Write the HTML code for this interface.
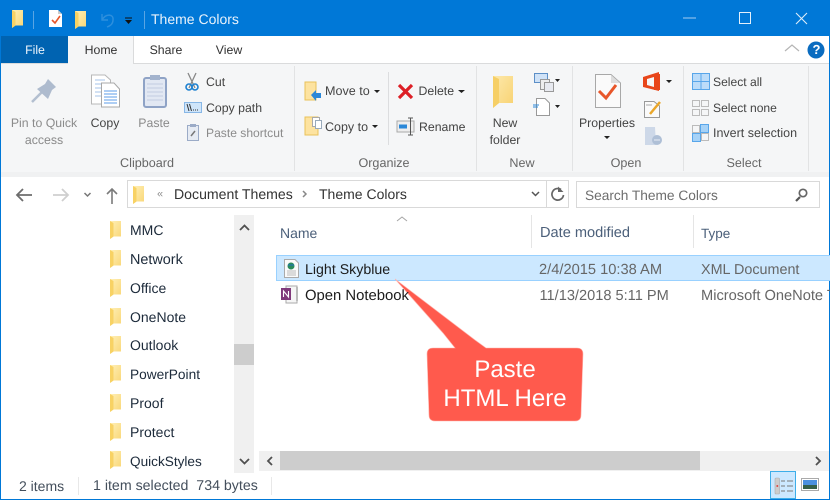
<!DOCTYPE html>
<html><head><meta charset="utf-8"><style>
html,body{margin:0;padding:0;background:#fff}
#p{position:relative;width:830px;height:500px;overflow:hidden;background:#fff;font-family:"Liberation Sans",sans-serif;font-size:14px;color:#1c1c1c;text-rendering:geometricPrecision}
.t{position:absolute;white-space:nowrap;line-height:18px;height:18px}
.g{color:#8b8b8b}.d{color:#444}.m{color:#666;font-size:12.6px}
.c{transform:translateX(-50%)}
.b{position:absolute}
svg{position:absolute;left:0;top:0}
</style></head><body><div id="p">
<div class="b" style="left:0;top:0;width:830px;height:36px;background:#0078d7"></div>
<div class="b" style="left:0;top:64px;width:830px;height:113px;background:#f5f6f7"></div>
<div class="b" style="left:0;top:63px;width:830px;height:1px;background:#dadbdc"></div>
<div class="b" style="left:0;top:172px;width:830px;height:5px;background:#f0f1f2"></div>
<div class="b" style="left:1px;top:36px;width:67px;height:27px;background:#0063b1"></div>
<div class="b" style="left:68px;top:36px;width:66px;height:29px;background:#f5f6f7"></div>
<div class="b" style="left:133px;top:36px;width:1px;height:28px;background:#dadbdc"></div>
<div class="b" style="left:0;top:0;width:1px;height:500px;background:#0078d7"></div>
<div class="b" style="left:829px;top:0;width:1px;height:500px;background:#0078d7"></div>
<div class="b" style="left:0;top:499px;width:830px;height:1px;background:#0078d7"></div>

<div class="b" style="left:294px;top:66px;width:1px;height:105px;background:#e2e3e4"></div>
<div class="b" style="left:476px;top:66px;width:1px;height:105px;background:#e2e3e4"></div>
<div class="b" style="left:572px;top:66px;width:1px;height:105px;background:#e2e3e4"></div>
<div class="b" style="left:683px;top:66px;width:1px;height:105px;background:#e2e3e4"></div>
<div class="b" style="left:808px;top:66px;width:1px;height:105px;background:#e2e3e4"></div>
<div class="b" style="left:388px;top:72px;width:1px;height:73px;background:#dcdddf"></div>

<div class="b" style="left:127px;top:180px;width:440px;height:26px;border:1px solid #d9d9d9;box-sizing:content-box"></div>
<div class="b" style="left:546px;top:180px;width:1px;height:28px;background:#d9d9d9"></div>
<div class="b" style="left:576px;top:181px;width:242px;height:25px;border:1px solid #d9d9d9"></div>

<div class="b" style="left:234px;top:215px;width:20px;height:258px;background:#f0f0f0"></div>
<div class="b" style="left:234px;top:344px;width:20px;height:21px;background:#cdcdcd"></div>
<div class="b" style="left:259px;top:451px;width:570px;height:20px;background:#f0f0f0"></div>
<div class="b" style="left:280px;top:451px;width:420px;height:19px;background:#cdcdcd"></div>
<div class="b" style="left:531px;top:215px;width:1px;height:33px;background:#e5e5e5"></div>
<div class="b" style="left:693px;top:215px;width:1px;height:33px;background:#e5e5e5"></div>
<div class="b" style="left:276px;top:255px;width:554px;height:26px;background:#cce8ff;border:1px solid #99d1ff;border-right:0;box-sizing:border-box"></div>
<div class="b" style="left:78px;top:477px;width:1px;height:18px;background:#e8e8e8"></div>
<div class="b" style="left:271px;top:477px;width:1px;height:18px;background:#e8e8e8"></div>
<div class="b" style="left:770px;top:471px;width:26px;height:28px;background:#cce8ff;border:1px solid #3daee9;box-sizing:border-box"></div>

<svg width="830" height="500" viewBox="0 0 830 500">
<defs>
<linearGradient id="fb" x1="0" y1="0" x2="1" y2="1"><stop offset="0" stop-color="#fff0b8"/><stop offset="1" stop-color="#f9d676"/></linearGradient>
<g id="f"><path d="M0 0H11V15.500H3.500L0 18Z" fill="url(#fb)"/><path d="M0 0L3.500 2V15.500L0 18Z" fill="#f8d264"/></g>
</defs>
<use href="#f" x="12" y="10"/>
<rect x="33" y="11" width="1" height="18" fill="#5aa5e3"/>
<path d="M49 10H58L62 14V27H49Z" fill="#fff"/><path d="M58 10L62 14H58Z" fill="#ccc"/><path d="M52 20L55 23L60 16" fill="none" stroke="#e8562a" stroke-width="1.600"/>
<use href="#f" x="75" y="11"/>
<path d="M102 14L102 20H108M102 20C106 13 114 14 113 20C113 24 110 26 107 27" fill="none" stroke="#2d8fdd" stroke-width="1.400"/>
<path d="M125 18H132" stroke="#111" stroke-width="1"/><path d="M125 20H132L128.500 24Z" fill="#111"/>
<rect x="144" y="11" width="1" height="18" fill="#5aa5e3"/>
<path d="M683 18H696" stroke="#a6cdf0" stroke-width="1"/>
<rect x="739.500" y="12.500" width="11" height="11" fill="none" stroke="#e3f0fb" stroke-width="1"/>
<path d="M796 13L807 24M807 13L796 24" stroke="#dcecf9" stroke-width="1.100"/>
<path d="M785 51L792 45L799 51" fill="none" stroke="#b4b4b4" stroke-width="1.200"/>
<circle cx="816" cy="50" r="8.500" fill="#0a6cc0"/>

<path d="M32 102L42 92" stroke="#b3bfd0" stroke-width="2.500"/><path d="M48 79L56 87L52 90L48 99L37 89L45 84Z" fill="#aebbce"/>
<path d="M91.500 75H105L110.500 80V104H91.500Z" fill="#fff" stroke="#b8b8b8"/>
<path d="M95 80H105M95 84H107M95 88H107M95 92H107M95 96H107" stroke="#a5c3e8"/>
<path d="M101.500 83H114L119.500 89V107H101.500Z" fill="#fff" stroke="#a8a8a8"/>
<path d="M104 91H117M104 94H117M104 97H117M104 100H117M104 103H117" stroke="#5d9ee8"/>
<rect x="144" y="78" width="22" height="29" rx="2" fill="#e2e8f3" stroke="#8fa3c6" stroke-width="2"/>
<rect x="150" y="75" width="10" height="5" fill="#a3b3cd"/>
<path d="M147 84H163M147 88H163M147 92H163M147 96H163M147 100H163" stroke="#c2cde0"/>
<path d="M196 73L189 88M188 73L195 88" stroke="#888" stroke-width="1.300"/>
<circle cx="189" cy="87" r="3" fill="none" stroke="#1d80d0" stroke-width="1.600"/><circle cx="195" cy="87" r="3" fill="none" stroke="#1d80d0" stroke-width="1.600"/>
<rect x="184.500" y="102.500" width="17" height="10" fill="#cfe5fa" stroke="#88b7e6"/>
<path d="M187 104L189 111M189.500 104L191.500 111" stroke="#333"/><path d="M193 110H199" stroke="#333" stroke-dasharray="1 1"/>
<rect x="187.500" y="125.500" width="11" height="15" fill="#e6ebf3" stroke="#9babc7"/><rect x="190" y="124" width="6" height="3" fill="#9babc7"/><path d="M191 136L195 131" stroke="#777" stroke-width="1.500"/>

<path d="M305 82H316V100H305Z" fill="#fde3a0" stroke="#e9c15a"/>
<path d="M311 95L316 90V93H321V98H316V101Z" fill="#2b88d8"/>
<path d="M305 117H318V135H305Z" fill="#fde3a0" stroke="#e9c15a"/>
<rect x="312.500" y="117.500" width="7" height="9" fill="#fff" stroke="#aaa"/><rect x="315.500" y="120.500" width="6" height="8" fill="#fff" stroke="#9ab"/>
<path d="M374 90H380L377 93Z M372 125H378L375 128Z M458 90H465L461.500 93Z M555 79H560L557.500 82Z M555 105H560L557.500 108Z M604 136H610L607 139Z M666 80H672L669 83Z" fill="#222"/>
<path d="M399 85L412 98M412 85L399 98" stroke="#dd1f26" stroke-width="3.200"/>
<rect x="397" y="121" width="17" height="11" fill="#eee" stroke="#a9a9a9"/><rect x="399" y="124.500" width="8" height="4" fill="#2b88d8"/>
<path d="M410.500 118V135M408 118H413M408 135H413" stroke="#555"/>
<defs><linearGradient id="nb" x1="0" y1="0" x2="1" y2="1"><stop offset="0" stop-color="#fde9ac"/><stop offset="1" stop-color="#f8d271"/></linearGradient></defs>
<path d="M493 76H513V103H499V103L493 108Z" fill="url(#nb)"/><path d="M493 76L499 79V103L493 108Z" fill="#f6cf66"/>
<rect x="534.500" y="73.500" width="13" height="9" fill="#cfe2f7" stroke="#5c8fc7"/><rect x="540.500" y="79.500" width="9" height="10" fill="#eee" stroke="#999"/><rect x="544.500" y="82.500" width="9" height="9" fill="#e8eaf0" stroke="#999"/>
<path d="M536.500 98.500H545L549.500 103V115.500H536.500Z" fill="#fff" stroke="#999"/>
<path d="M533 105H539M533 107H538" stroke="#2b88d8"/>
<path d="M595.500 74.500H611L620.500 83V107.500H595.500Z" fill="#fafafa" stroke="#a8a8a8"/><path d="M611 75V83H620Z" fill="#ddd"/>
<path d="M599 91L606 98L616 85" fill="none" stroke="#e8562a" stroke-width="3"/>
<path d="M643 77L659 72V91L643 87Z" fill="#e8461a"/><path d="M647 79L654 77V87L647 85Z" fill="#f5f6f7"/><path d="M654 74H660V90H654Z" fill="#e8461a"/>
<path d="M644.500 101.500H654L659.500 106V117.500H644.500Z" fill="#fafafa" stroke="#999"/><path d="M650 114L660 102" stroke="#eaa72a" stroke-width="2.500"/><path d="M646 105H652" stroke="#aaa"/>
<path d="M645 127H655L656 145H645Z" fill="#cdd8e8"/><circle cx="657" cy="140" r="5" fill="#aebfd6"/><path d="M654 140H660" stroke="#e8eef5"/>
<rect x="692.500" y="73.500" width="17" height="16" fill="#bcdcf9" stroke="#58a6ea"/><path d="M701 74V89M693 81.500H709" stroke="#58a6ea"/>
<path d="M692.500 100.500H699.500V106.500H692.500ZM701.500 100.500H708.500V106.500H701.500ZM692.500 109.500H699.500V115.500H692.500ZM701.500 109.500H708.500V115.500H701.500Z" fill="#f5f6f7" stroke="#bbb"/>
<path d="M692.500 125.500H699.500V132.500H692.500ZM701.500 133.500H708.500V140.500H701.500Z" fill="#f5f6f7" stroke="#bbb"/>
<path d="M700.500 124.500H708.500V132.500H700.500ZM692.500 133.500H700.500V141.500H692.500Z" fill="#a6d2f7" stroke="#58a6ea"/>

<path d="M32 195H17M23 189L17 195L23 201" fill="none" stroke="#6d6d6d" stroke-width="1.800"/>
<path d="M53 195H68M62 189L68 195L62 201" fill="none" stroke="#cfcfcf" stroke-width="1.800"/>
<path d="M84.500 193L87.500 196L90.500 193" fill="none" stroke="#777" stroke-width="1.500"/>
<path d="M112 204V189M107 194L112 189L117 194" fill="none" stroke="#7b7b7b" stroke-width="1.600"/>
<use href="#f" x="133" y="186"/>
<path d="M303 191L306 194L303 197" fill="none" stroke="#888" stroke-width="1.500"/>
<path d="M532 192L535.500 195.500L539 192" fill="none" stroke="#555" stroke-width="1.500"/>
<path d="M561 189.500A5.800 5.800 0 1 0 563.500 195" fill="none" stroke="#666" stroke-width="1.700"/><path d="M558 186.500V192H563.500Z" fill="#666"/>
<circle cx="803" cy="193" r="3.700" fill="none" stroke="#666" stroke-width="1.700"/><path d="M800 197L796 201" stroke="#555" stroke-width="2.200"/>
<use href="#f" x="110" y="221"/><use href="#f" x="110" y="250"/><use href="#f" x="110" y="279"/><use href="#f" x="110" y="308"/>
<use href="#f" x="110" y="336"/><use href="#f" x="110" y="365"/><use href="#f" x="110" y="394"/><use href="#f" x="110" y="423"/><use href="#f" x="110" y="451"/>
<path d="M240 230L244.500 225.500L249 230" fill="none" stroke="#505050" stroke-width="1.800"/>
<path d="M240 459L244.500 463.500L249 459" fill="none" stroke="#505050" stroke-width="1.800"/>
<path d="M272 457L268 461L272 465" fill="none" stroke="#505050" stroke-width="1.800"/>
<path d="M816 457L820 461L816 465" fill="none" stroke="#505050" stroke-width="1.800"/>
<path d="M397 221L402 217L407 221" fill="none" stroke="#a5a5a5"/>
<path d="M284.500 259.500H295L298.500 263V277.500H284.500Z" fill="#fafafa" stroke="#aaa"/>
<circle cx="291" cy="266" r="3.500" fill="#2a8a5a"/><path d="M288 265H294" stroke="#2070c0"/><path d="M287 271H296M287 273H296M287 275H296" stroke="#bbb"/>
<rect x="286" y="286" width="11" height="17" fill="#f5f5f5" stroke="#aaa"/><rect x="296" y="287" width="2" height="14" fill="#bbb"/>
<rect x="281" y="288" width="10" height="12" fill="#80397b"/><path d="M283.500 297V291L288.500 297V291" fill="none" stroke="#fff" stroke-width="1.100"/>
<rect x="775" y="478" width="4.500" height="16" rx="1" fill="#ccc" stroke="#aaa" stroke-width=".6"/>
<path d="M781 481H785M787 481H793M781 486H785M787 486H793M781 491H785M787 491H793" stroke="#777"/>
<circle cx="777.300" cy="486" r="1" fill="#d44"/>
<rect x="801.500" y="478.500" width="17" height="12" fill="#fff" stroke="#aaa"/>
<rect x="803" y="480" width="14" height="5" fill="#4a90e0"/><rect x="803" y="485" width="14" height="4" fill="#35604a"/>
<path d="M395 279L443 333L455 348H433Q427 348 427 354L429 415Q429 421 435 421H575Q581 421 581 415L583 354Q583 348 577 348H486L475 340Z" fill="#ff5a4d" stroke="#ffb3ac" stroke-width=".6"/>
</svg>

<div class="t" style="left:151px;top:10px;color:#e8f2fb;font-size:14px">Theme Colors</div>
<div style="font-size:12.300px">
<div class="t c" style="left:35px;top:41px;color:#eaf3fb">File</div>
<div class="t c" style="left:101px;top:41px;color:#333">Home</div>
<div class="t c" style="left:166px;top:41px;color:#333">Share</div>
<div class="t c" style="left:229px;top:41px;color:#333">View</div>
</div>
<div class="t" style="left:812.500px;top:41px;color:#fff;font-size:13px;font-weight:bold">?</div>

<div style="font-size:12.300px">
<div class="t c g" style="left:44px;top:114px">Pin to Quick</div>
<div class="t c g" style="left:44px;top:131px">access</div>
<div class="t c d" style="left:105px;top:114px">Copy</div>
<div class="t c g" style="left:154px;top:114px">Paste</div>
<div class="t d" style="left:206px;top:73px">Cut</div>
<div class="t d" style="left:206px;top:99px">Copy path</div>
<div class="t g" style="left:206px;top:124px;font-size:12.100px">Paste shortcut</div>
<div class="t c m" style="left:147px;top:154px">Clipboard</div>
<div class="t d" style="left:325px;top:82px;font-size:12.600px">Move to</div>
<div class="t d" style="left:325px;top:118px;font-size:12.500px">Copy to</div>
<div class="t d" style="left:418.500px;top:82px">Delete</div>
<div class="t d" style="left:419px;top:118px">Rename</div>
<div class="t c m" style="left:384px;top:154px">Organize</div>
<div class="t c d" style="left:505px;top:114px">New</div>
<div class="t c d" style="left:505px;top:131px">folder</div>
<div class="t c m" style="left:522px;top:154px">New</div>
<div class="t c d" style="left:607px;top:114px">Properties</div>
<div class="t c m" style="left:626px;top:154px">Open</div>
<div class="t d" style="left:713px;top:73px;font-size:12.100px">Select all</div>
<div class="t d" style="left:713px;top:99px;font-size:12.100px">Select none</div>
<div class="t d" style="left:713px;top:124px;font-size:12.500px">Invert selection</div>
<div class="t c m" style="left:744px;top:154px">Select</div>
</div>

<div class="t g" style="left:157px;top:185px;font-size:11px">«</div>
<div class="t" style="left:174px;top:185px;color:#333;font-size:14.100px">Document Themes</div>
<div class="t" style="left:319px;top:185px;color:#333;font-size:14px">Theme Colors</div>
<div class="t" style="left:585px;top:187px;color:#6d6d6d;font-size:13.700px">Search Theme Colors</div>

<div class="t" style="left:130px;top:221px;color:#1c2a3a">MMC</div>
<div class="t" style="left:130px;top:251px;color:#1c2a3a;font-size:14.400px">Network</div>
<div class="t" style="left:130px;top:279px;color:#1c2a3a">Office</div>
<div class="t" style="left:130px;top:308px;color:#1c2a3a">OneNote</div>
<div class="t" style="left:130px;top:336px;color:#1c2a3a">Outlook</div>
<div class="t" style="left:130px;top:366px;color:#1c2a3a;font-size:13.700px">PowerPoint</div>
<div class="t" style="left:130px;top:394px;color:#1c2a3a">Proof</div>
<div class="t" style="left:130px;top:423px;color:#1c2a3a">Protect</div>
<div class="t" style="left:130px;top:453px;color:#1c2a3a;font-size:13.600px">QuickStyles</div>

<div class="t" style="left:280px;top:224px;color:#4c607a">Name</div>
<div class="t" style="left:540px;top:224px;color:#4c607a;font-size:14.600px">Date modified</div>
<div class="t" style="left:701px;top:225px;color:#4c607a;font-size:13.500px">Type</div>
<div class="t" style="left:305px;top:261px;color:#1c1c1c;font-size:14.200px">Light Skyblue</div>
<div class="t" style="left:305px;top:287px;color:#1c1c1c;font-size:14.850px">Open Notebook</div>
<div class="t" style="left:539px;top:261px;color:#666;font-size:14.670px">2/4/2015 10:38 AM</div>
<div class="t" style="left:539.500px;top:287px;color:#666;font-size:14.600px">11/13/2018 5:11 PM</div>
<div class="t" style="left:701px;top:261px;color:#666;font-size:14.370px">XML Document</div>
<div class="t" style="left:701px;top:287px;color:#666;font-size:14.650px">Microsoft OneNote T</div>

<div class="t" style="left:19px;top:477px;color:#444f5c">2 items</div>
<div class="t" style="left:93px;top:477px;color:#444f5c;font-size:14.200px">1 item selected&nbsp; 734 bytes</div>

<div class="t c" style="left:505px;top:355px;color:#fff;font-size:24px;line-height:30px;height:30px">Paste</div>
<div class="t c" style="left:505px;top:384px;color:#fff;font-size:24px;line-height:30px;height:30px">HTML Here</div>
</div></body></html>
